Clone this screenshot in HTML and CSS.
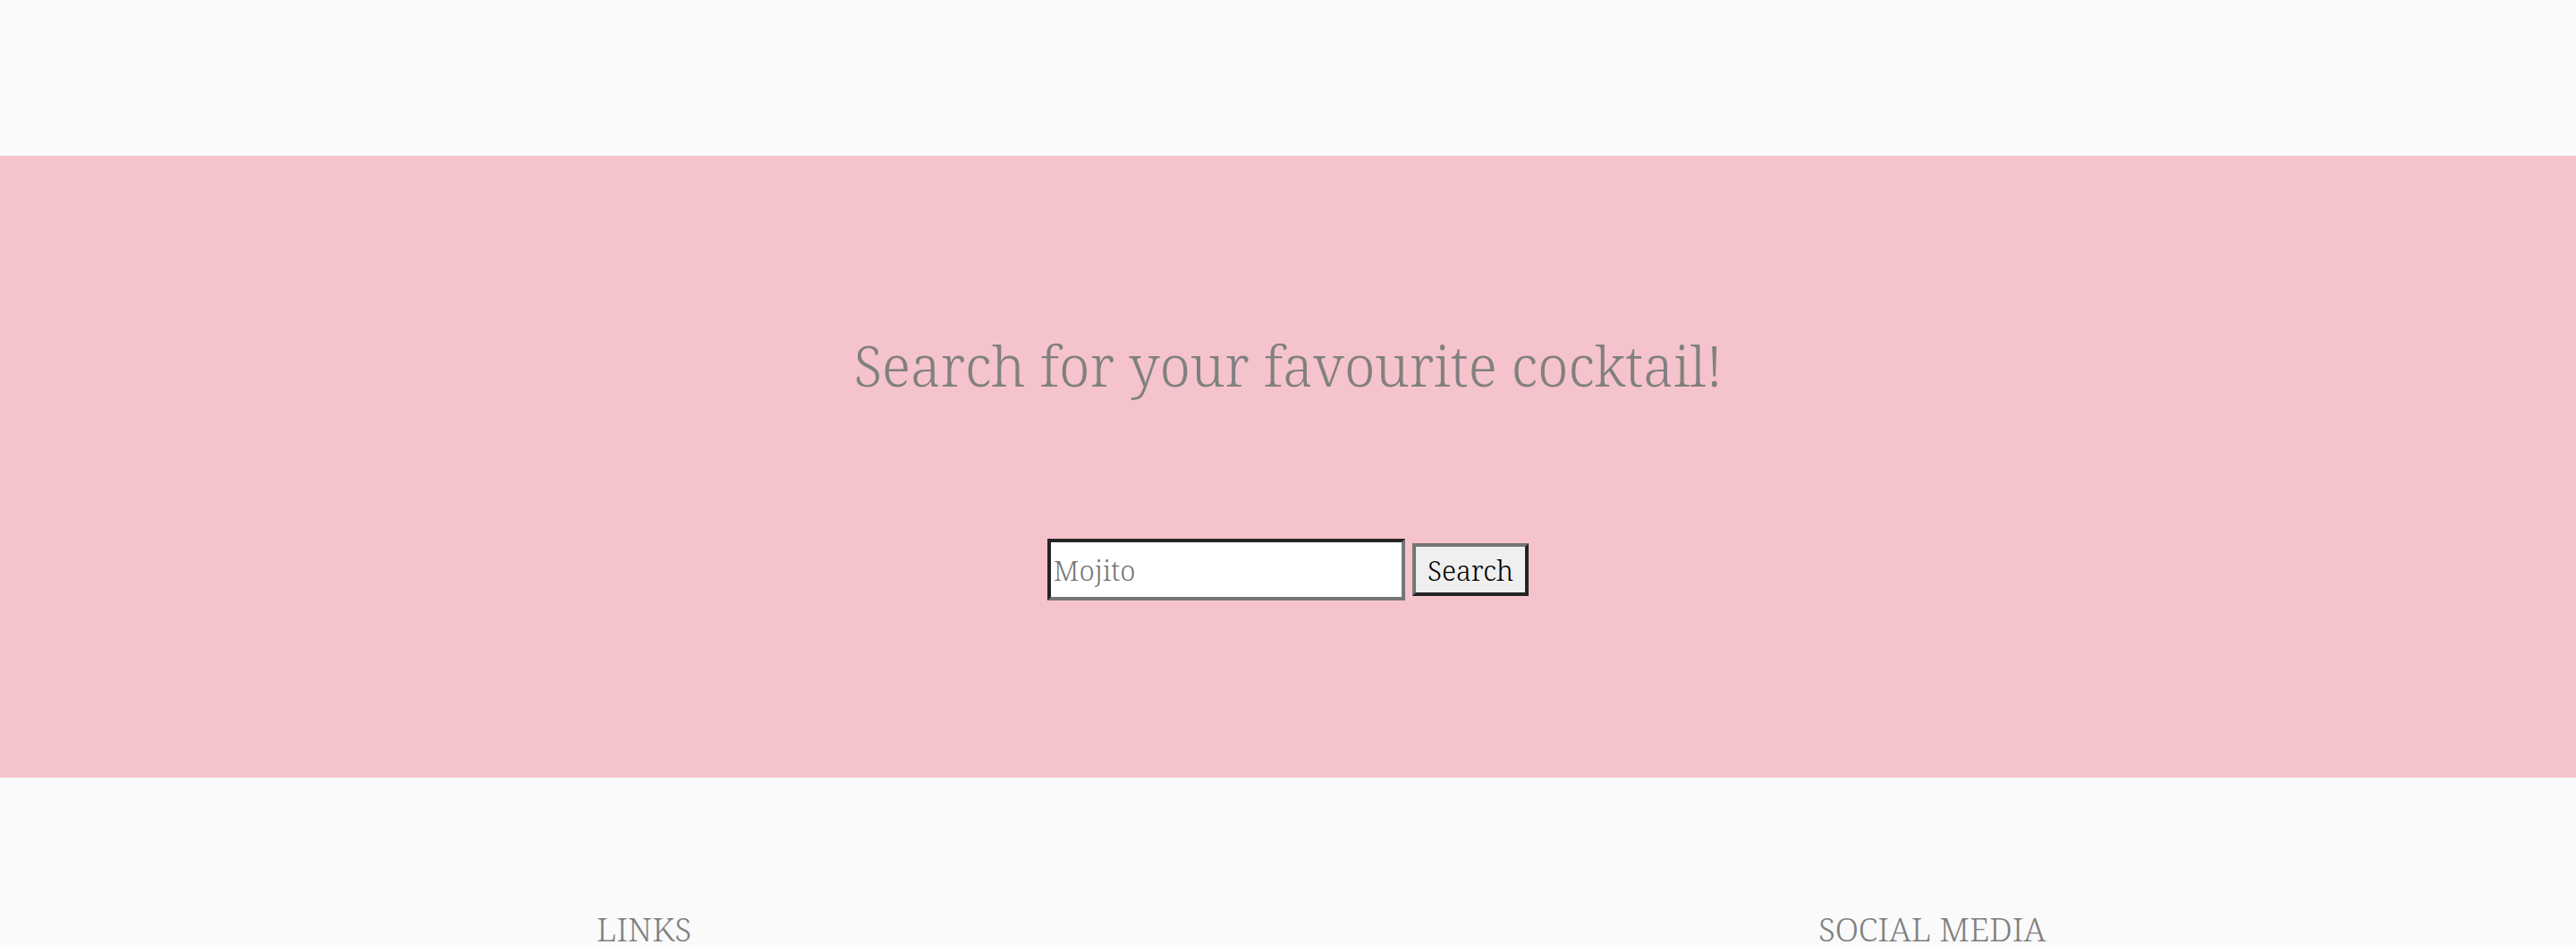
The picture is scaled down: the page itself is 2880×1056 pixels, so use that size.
FILE: index.html
```html
<!DOCTYPE html>
<html lang="en">
<head>
<meta charset="utf-8">
<title>Cocktail search</title>
<link rel="stylesheet" href="styles.css">
</head>
<body>
<header class="top-bar"></header>
<main class="hero">
  <h1 class="hero-title">Search for your favourite cocktail!</h1>
  <form class="search-form">
    <input class="search-input" type="text" placeholder="Mojito">
    <button class="search-button" type="button">Search</button>
  </form>
</main>
<footer class="site-footer">
  <div class="footer-col"><h3 class="footer-title">LINKS</h3></div>
  <div class="footer-col"><h3 class="footer-title">SOCIAL MEDIA</h3></div>
</footer>
</body>
</html>
```
FILE: styles.css
```css
html, body {
  margin: 0;
  padding: 0;
}
body {
  background: #fafafa;
  font-family: "Noto Serif", "Liberation Serif", serif;
  font-weight: 300;
  color: #808080;
}
.top-bar {
  height: 174px;
}
.hero {
  background: #f5c3cb;
  height: 695px;
  box-sizing: border-box;
  padding-top: 192px;
  display: flex;
  flex-direction: column;
  align-items: center;
}
.hero-title {
  margin: 0;
  font-size: 62px;
  line-height: 84px;
  font-weight: 300;
  color: #808080;
  white-space: nowrap;
}
.search-form {
  margin-top: 152px;
  display: flex;
  align-items: center;
  gap: 8px;
}
.search-input {
  box-sizing: border-box;
  width: 400px;
  height: 69px;
  margin: 0;
  padding: 0 3px;
  border-width: 4px;
  border-style: solid;
  border-color: #242424 #767676 #767676 #242424;
  background: #fff;
  font-family: "Noto Serif", "Liberation Serif", serif;
  font-weight: 300;
  font-size: 31px;
  color: #000;
  outline: none;
}
.search-input::placeholder {
  color: #757575;
  opacity: 1;
}
.search-button {
  box-sizing: border-box;
  height: 59px;
  margin: 0;
  padding: 0 13px;
  border-width: 4px;
  border-style: solid;
  border-color: #767676 #242424 #242424 #767676;
  background: #efefef;
  font-family: "Noto Serif", "Liberation Serif", serif;
  font-weight: 300;
  font-size: 31px;
  color: #000;
}
.site-footer {
  display: grid;
  grid-template-columns: 1fr 1fr;
  padding-top: 144px;
}
.footer-col {
  text-align: center;
}
.footer-title {
  margin: 0;
  font-size: 36.5px;
  line-height: 50px;
  font-weight: 300;
  color: #808080;
}
```
